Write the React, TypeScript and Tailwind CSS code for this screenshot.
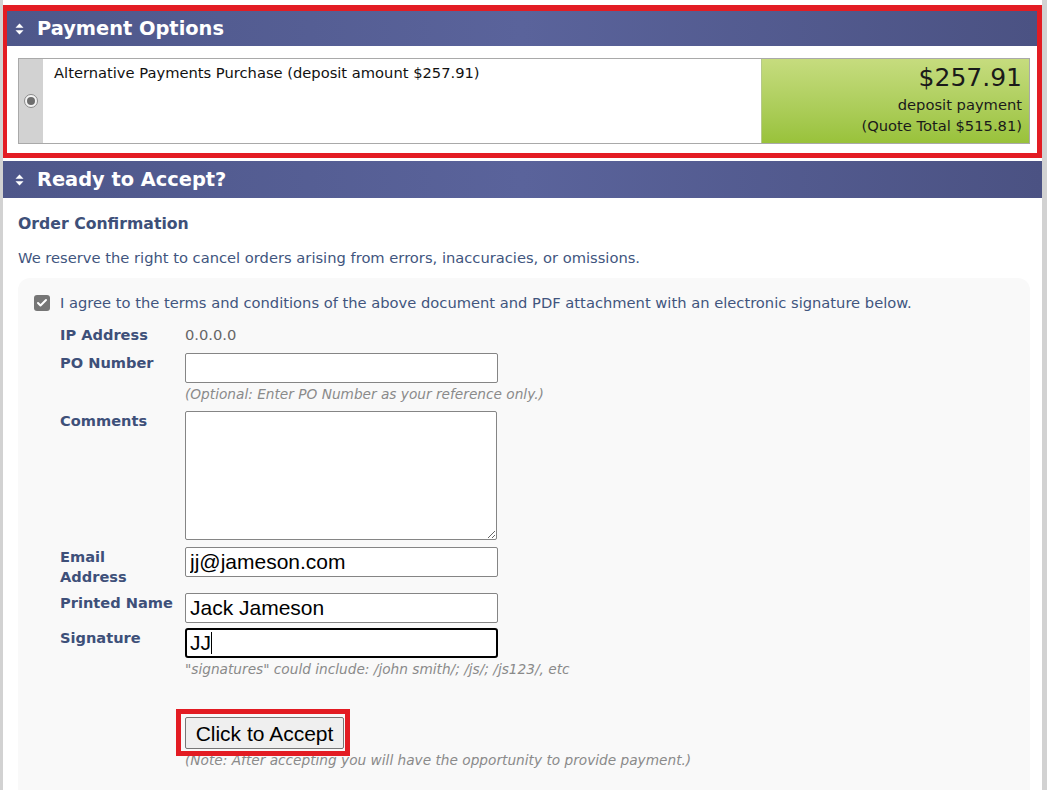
import { Check } from 'lucide-react'

const verdana = { fontFamily: '"DejaVu Sans", Verdana, sans-serif' }
const arial = { fontFamily: '"Liberation Sans", Arial, sans-serif' }

function SortArrows() {
  return (
    <svg width="9" height="12" viewBox="0 0 9 12" className="shrink-0">
      <path d="M4.5 0.5 L8.5 4.8 H0.5 Z" fill="#fff" />
      <path d="M4.5 11.5 L8.5 7.2 H0.5 Z" fill="#fff" />
    </svg>
  )
}

function SectionHeader({ title, full }: { title: string; full?: boolean }) {
  return (
    <div
      className={`flex items-center gap-[13px] text-white font-bold text-[19.4px] bg-gradient-to-r from-[#4e578a] via-[#5a639b] to-[#4b5283] ${
        full ? 'h-[37px] pl-[12px]' : 'h-[35px] pl-[8px]'
      }`}
    >
      <SortArrows />
      <span className="leading-none">{title}</span>
    </div>
  )
}

function Field({ label, children }: { label: string; children: React.ReactNode }) {
  return (
    <div className="flex items-start">
      <div className="w-[125px] shrink-0 pr-[10px] font-bold text-[#3e5079] text-[14.6px] leading-[20px]">{label}</div>
      <div>{children}</div>
    </div>
  )
}

function TextInput({ value }: { value?: string }) {
  return (
    <input
      readOnly
      defaultValue={value}
      className="block w-[313px] h-[30px] bg-white border border-[#858585] rounded-[2px] px-[4px] text-[21px] text-black outline-none"
      style={arial}
    />
  )
}

function Hint({ children }: { children: React.ReactNode }) {
  return <div className="mt-[4px] text-[13.7px] italic text-[#8a8a8a] leading-[15px] whitespace-nowrap">{children}</div>
}

export default function App() {
  return (
    <div className="min-h-screen bg-[#d2d2d2] pl-[3px] pr-[5px]" style={verdana}>
      <div className="bg-white min-h-[790px] pt-[5px] overflow-hidden">
        {/* Payment options */}
        <section className="border-4 border-t-[6px] border-b-[5px] border-r-[5px] border-[#e31c23] pb-[9px]">
          <SectionHeader title="Payment Options" />
          <div className="pl-[11px] pr-[7px] pt-[12px]">
            <div className="flex h-[86px] border border-[#a9a9a9]">
              <div className="w-[24px] bg-[#d2d2d2] flex items-center justify-center">
                <span className="w-[14px] h-[14px] rounded-full border border-[#8a8a8a] bg-[#f4f4f4] flex items-center justify-center">
                  <span className="w-[8px] h-[8px] rounded-full bg-[#6e6e6e]" />
                </span>
              </div>
              <div className="flex-1 pl-[11px] pt-[4px] text-[14.7px] text-[#111] leading-[20px]">
                Alternative Payments Purchase (deposit amount $257.91)
              </div>
              <div className="w-[268px] bg-gradient-to-b from-[#c6dc7e] to-[#99c23a] text-right pr-[7px] pt-[3px] text-[#1a1a1a] border-l border-[#b5c98a]">
                <div className="text-[25px] leading-[32px]">$257.91</div>
                <div className="text-[14.7px] leading-[21px]">deposit payment</div>
                <div className="text-[14.7px] leading-[21px]">(Quote Total $515.81)</div>
              </div>
            </div>
          </div>
        </section>

        {/* Ready to accept */}
        <section className="mt-[3px]">
          <SectionHeader title="Ready to Accept?" full />
          <div className="pl-[15px] pr-[12px] pt-[16px]">
            <h3 className="text-[15.7px] font-bold text-[#3e5079] leading-[19px]">Order Confirmation</h3>
            <p className="mt-[15px] text-[14.7px] text-[#41557e] leading-[20px]">
              We reserve the right to cancel orders arising from errors, inaccuracies, or omissions.
            </p>
            <div className="mt-[10px] bg-[#f9f9f9] rounded-[12px] pl-[16px] pt-[15px] pb-[40px]">
              <div className="flex items-center gap-[10px] text-[14.7px] text-[#41557e] leading-[20px]">
                <span className="w-[16px] h-[16px] rounded-[3px] bg-[#767676] flex items-center justify-center">
                  <Check size={12} strokeWidth={4} color="#fff" />
                </span>
                I agree to the terms and conditions of the above document and PDF attachment with an electronic signature below.
              </div>

              <div className="pl-[26px] mt-[12px] flex flex-col">
                <Field label="IP Address">
                  <div className="text-[14.7px] text-[#666] leading-[20px]">0.0.0.0</div>
                </Field>
                <div className="mt-[8px]">
                  <Field label="PO Number">
                    <TextInput />
                    <Hint>(Optional: Enter PO Number as your reference only.)</Hint>
                  </Field>
                </div>
                <div className="mt-[9px]">
                  <Field label="Comments">
                    <textarea
                      readOnly
                      className="block w-[312px] h-[129px] bg-white border border-[#858585] rounded-[2px] resize-y outline-none"
                    />
                  </Field>
                </div>
                <div className="mt-[7px]">
                  <Field label="Email Address">
                    <TextInput value="jj@jameson.com" />
                  </Field>
                </div>
                <div className="mt-[6px]">
                  <Field label="Printed Name">
                    <TextInput value="Jack Jameson" />
                  </Field>
                </div>
                <div className="mt-[5px]">
                  <Field label="Signature">
                    <div
                      className="w-[313px] h-[30px] bg-white border-2 border-black rounded-[3px] px-[3px] flex items-center text-[21px] text-black"
                      style={arial}
                    >
                      JJ<span className="w-px h-[22px] bg-black" />
                    </div>
                    <Hint>"signatures" could include: /john smith/; /js/; /js123/, etc</Hint>
                  </Field>
                </div>
                <div className="pl-[125px] mt-[40px]">
                  <div className="relative inline-block">
                    <button
                      type="button"
                      className="w-[159px] h-[32px] bg-[#efefef] border border-[#767676] rounded-[2px] text-[21px] text-black"
                      style={arial}
                    >
                      Click to Accept
                    </button>
                    <span className="absolute -left-[9px] -right-[6px] -top-[8px] -bottom-[7px] border-[5px] border-[#e31c23] pointer-events-none" />
                  </div>
                  <Hint>(Note: After accepting you will have the opportunity to provide payment.)</Hint>
                </div>
              </div>
            </div>
          </div>
        </section>
      </div>
    </div>
  )
}
